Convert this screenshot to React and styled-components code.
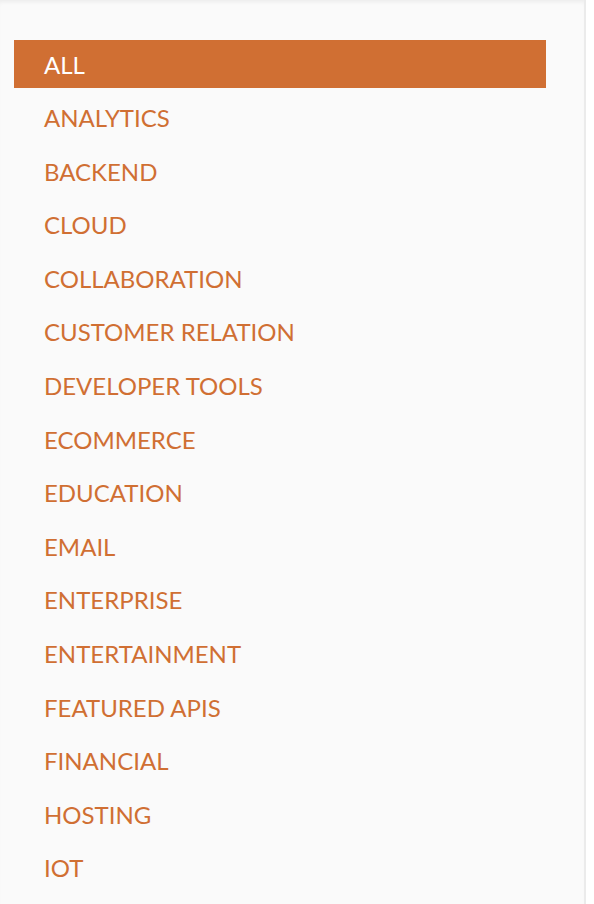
import React from 'react';
import styled, { createGlobalStyle } from 'styled-components';

const categories = [
  'ALL',
  'ANALYTICS',
  'BACKEND',
  'CLOUD',
  'COLLABORATION',
  'CUSTOMER RELATION',
  'DEVELOPER TOOLS',
  'ECOMMERCE',
  'EDUCATION',
  'EMAIL',
  'ENTERPRISE',
  'ENTERTAINMENT',
  'FEATURED APIS',
  'FINANCIAL',
  'HOSTING',
  'IOT',
];

const App = () => {
  const active = 'ALL';
  return (
    <>
      <GlobalStyle />
      <Sidebar>
        <CategoryList>
          {categories.map((name) => (
            <CategoryItem key={name} $active={name === active}>
              {name}
            </CategoryItem>
          ))}
        </CategoryList>
      </Sidebar>
    </>
  );
};

export default App;

const GlobalStyle = createGlobalStyle`
  html, body {
    margin: 0;
    background: #ffffff;
  }
  body {
    font-family: Lato, 'Open Sans', sans-serif;
  }
`;

const Sidebar = styled.aside`
  width: 586px;
  height: 904px;
  box-sizing: border-box;
  background-color: #fafafa;
  border-right: 2px solid #ebebeb;
  box-shadow: inset 0 4px 4px -2px rgba(0, 0, 0, 0.06);
  padding: 40px 38px 0 14px;
  overflow: hidden;
`;

const CategoryList = styled.ul`
  list-style: none;
  margin: 0;
  padding: 0;
  display: flex;
  flex-direction: column;
  gap: 5.6px;
`;

const CategoryItem = styled.li`
  height: 48px;
  display: flex;
  align-items: center;
  padding-left: 30px;
  font-size: 24px;
  font-weight: 400;
  color: ${({ $active }) => ($active ? '#ffffff' : '#d06f33')};
  background-color: ${({ $active }) => ($active ? '#d06f33' : 'transparent')};
  cursor: pointer;
`;
